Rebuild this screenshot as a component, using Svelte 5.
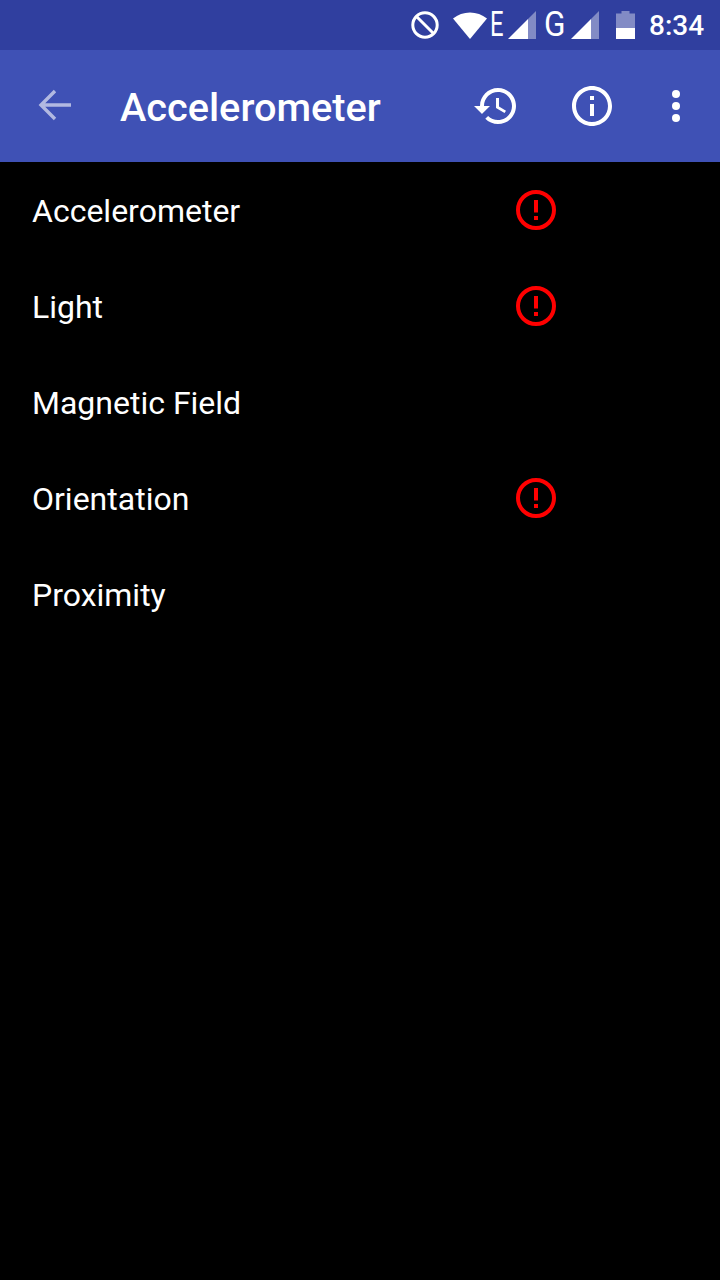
<script lang="ts">
  const sensors = [
    { name: 'Accelerometer', warn: true },
    { name: 'Light', warn: true },
    { name: 'Magnetic Field', warn: false },
    { name: 'Orientation', warn: true },
    { name: 'Proximity', warn: false }
  ];
</script>

{#snippet signal()}
  <svg class="signal" width="28" height="28" viewBox="0 0 28 28">
    <path d="M28 0V28H20V8z" fill="#fff" fill-opacity="0.4" />
    <path d="M0 28L20 8V28z" fill="#fff" />
  </svg>
{/snippet}

<div class="screen">
  <div class="status">
    <svg class="block" width="28" height="28" viewBox="0 0 28 28" fill="none" stroke="#fff" stroke-width="3">
      <circle cx="14" cy="14" r="12.2" />
      <path d="M5.5 5.5L22.5 22.5" />
    </svg>
    <svg class="wifi" width="34" height="27" viewBox="0 0 34 27">
      <path d="M0 6.500A27 27 0 0 1 34 6.500L17 27z" fill="#fff" />
    </svg>
    <span class="net net-e">E</span>
    {@render signal()}
    <span class="net net-g">G</span>
    {@render signal()}
    <svg class="battery" width="19" height="28" viewBox="0 0 19 28">
      <path d="M5.500 0h8v2.500H19V17H0V2.500h5.500z" fill="#fff" fill-opacity="0.4" />
      <path d="M0 17h19v11H0z" fill="#fff" />
    </svg>
    <span class="time">8:34</span>
  </div>

  <header class="toolbar">
    <svg class="back" width="34" height="32" viewBox="0 0 34 32" fill="none" stroke="#fff" stroke-opacity="0.6" stroke-width="3.4">
      <path d="M33 16H3M17 2L3 16l14 14" />
    </svg>
    <h1>Accelerometer</h1>
    <svg class="action" width="48" height="48" viewBox="0 0 24 24" fill="#fff">
      <path d="M13 3c-4.970 0-9 4.030-9 9H1l3.890 3.890.07.14L9 12H6c0-3.870 3.130-7 7-7s7 3.130 7 7-3.130 7-7 7c-1.930 0-3.680-.79-4.940-2.060l-1.420 1.420C8.270 19.990 10.510 21 13 21c4.970 0 9-4.030 9-9s-4.030-9-9-9zm-1 5v5l4.280 2.540.72-1.210-3.500-2.080V8H12z" />
    </svg>
    <svg class="action info" width="48" height="48" viewBox="0 0 24 24" fill="#fff">
      <path d="M11 7h2v2h-2zm0 4h2v6h-2zm1-9C6.480 2 2 6.480 2 12s4.480 10 10 10 10-4.480 10-10S17.520 2 12 2zm0 18c-4.410 0-8-3.590-8-8s3.590-8 8-8 8 3.590 8 8-3.590 8-8 8z" />
    </svg>
    <svg class="action more" width="48" height="48" viewBox="0 0 24 24" fill="#fff">
      <circle cx="12" cy="6" r="2" />
      <circle cx="12" cy="12" r="2" />
      <circle cx="12" cy="18" r="2" />
    </svg>
  </header>

  <ul class="list">
    {#each sensors as sensor}
      <li>
        <span>{sensor.name}</span>
        {#if sensor.warn}
          <svg width="40" height="40" viewBox="0 0 40 40" fill="#f00">
            <circle cx="20" cy="20" r="18" fill="none" stroke="#f00" stroke-width="4" />
            <rect x="18" y="10" width="4" height="12.500" />
            <rect x="18" y="26" width="4" height="4" />
          </svg>
        {/if}
      </li>
    {/each}
  </ul>
</div>

<style>
  :global(body) {
    background: #000;
  }
  .screen {
    width: 720px;
    height: 1280px;
    background: #000;
    color: #fff;
    font-family: Roboto, "Liberation Sans", sans-serif;
    overflow: hidden;
  }
  .status {
    height: 50px;
    box-sizing: border-box;
    background: #303f9f;
    display: flex;
    align-items: center;
    justify-content: flex-end;
    padding-right: 17px;
  }
  .status svg {
    flex: none;
  }
  .wifi {
    margin-left: 14px;
  }
  .net {
    font-size: 35px;
    line-height: 50px;
    display: block;
  }
  .net-e {
    width: 13px;
    margin-left: 3px;
    transform: scaleX(0.68);
    transform-origin: left center;
  }
  .net-g {
    width: 21px;
    margin-left: 8px;
    margin-right: 1px;
    transform: scaleX(0.9);
    transform-origin: left center;
  }
  .signal {
    margin-left: 5px;
  }
  .battery {
    margin-left: 17px;
  }
  .time {
    margin-left: 14px;
    width: 54px;
    font-size: 28px;
    font-weight: 500;
  }
  .toolbar {
    height: 112px;
    background: #3f51b5;
    display: flex;
    align-items: center;
    padding-left: 38px;
  }
  .back {
    flex: none;
    margin-top: -2px;
  }
  h1 {
    margin: 2px 0 0 48px;
    width: 352px;
    font-size: 39.7px;
    font-weight: 500;
    white-space: nowrap;
  }
  .action {
    flex: none;
  }
  .info {
    margin-left: 48px;
  }
  .more {
    margin-left: 36px;
  }
  .list {
    list-style: none;
    margin: 0;
    padding: 0;
  }
  li {
    height: 96px;
    box-sizing: border-box;
    padding-left: 32px;
    display: grid;
    grid-template-columns: 484px 40px;
    align-items: center;
    font-size: 32px;
  }
  li span {
    padding-top: 2px;
  }
</style>
